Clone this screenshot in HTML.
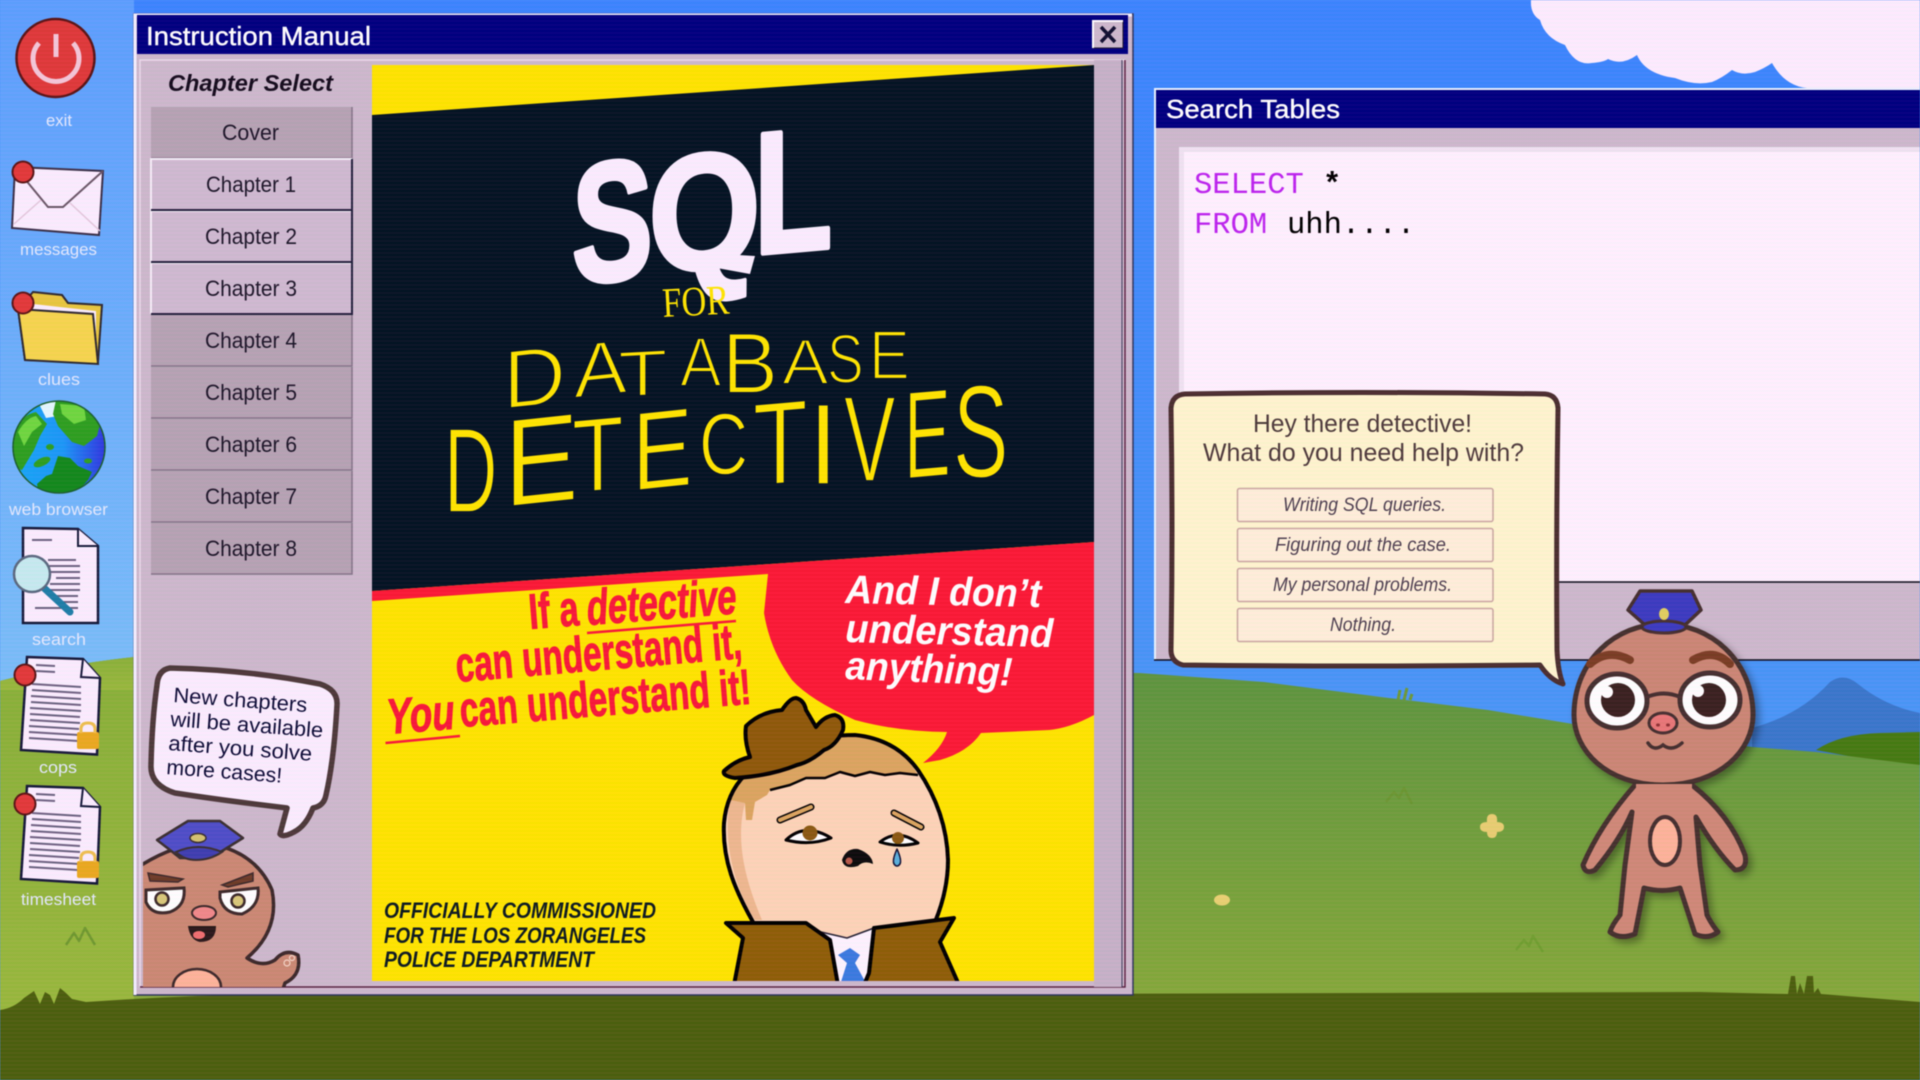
<!DOCTYPE html>
<html lang="en"><head><meta charset="utf-8"><title>Instruction Manual</title>
<style>
html,body{margin:0;padding:0;width:1920px;height:1080px;overflow:hidden;background:#4a95f8}
svg{position:absolute;left:0;top:0;display:block;filter:blur(.5px)}
text{font-family:"Liberation Sans",sans-serif}
#scan{position:absolute;left:0;top:0;width:1920px;height:1080px;pointer-events:none;
background:repeating-linear-gradient(to bottom,rgba(255,80,200,.03) 0,rgba(255,80,200,.03) 2px,rgba(30,50,70,.018) 2px,rgba(30,50,70,.018) 4px)}
</style></head><body>
<svg width="1920" height="1080" viewBox="0 0 1920 1080" xmlns="http://www.w3.org/2000/svg">
<defs>
<linearGradient id="sky" x1="0" y1="0" x2="0" y2="1"><stop offset="0" stop-color="#3c86ff"/><stop offset="1" stop-color="#52a0f4"/></linearGradient>
<linearGradient id="skyL" x1="0" y1="0" x2="0" y2="1"><stop offset="0" stop-color="#5da0ff"/><stop offset="1" stop-color="#7cc0fa"/></linearGradient>
<linearGradient id="grass" x1="0" y1="0" x2="0" y2="1"><stop offset="0" stop-color="#5c9540"/><stop offset="1" stop-color="#8bad3a"/></linearGradient>
<linearGradient id="grassL" x1="0" y1="0" x2="0" y2="1"><stop offset="0" stop-color="#8ab23a"/><stop offset="1" stop-color="#9aba3e"/></linearGradient>
<linearGradient id="ocean" x1="0" y1="0" x2="1" y2="0"><stop offset="0" stop-color="#18a8f8"/><stop offset=".55" stop-color="#1c98f8"/><stop offset="1" stop-color="#3038e0"/></linearGradient>
<clipPath id="panelClip"><rect x="143" y="60" width="229" height="927"/></clipPath>
<clipPath id="coverClip"><rect x="372" y="65" width="722" height="916"/></clipPath>
<clipPath id="globeClip"><circle cx="59" cy="447" r="46"/></clipPath>
<filter id="sh" x="-20%" y="-20%" width="140%" height="140%"><feDropShadow dx="4" dy="4" stdDeviation="4" flood-color="#000" flood-opacity=".35"/></filter>
<g id="doc"><path d="M27 657 83 659 100 678 97 754.5 21 750Z" fill="#fbeeff" stroke="#161a3a" stroke-width="2.5"/><path d="M83 659 81 677 100 678" fill="#fbeeff" stroke="#161a3a" stroke-width="2"/>
<path d="M36 665 55 666M36 671 55 672M32 684 81 687M32 690 81 693M31 696 81 699M31 702 81 705M30 708 81 711M30 714 80 717M30 720 80 723M29 726 79 729M29 732 79 735M29 738 78 741" stroke="#6b6280" stroke-width="2"/>
<rect x="77" y="732" width="22" height="17" rx="2" fill="#eaaa20"/><path d="M81 733v-4q0-6 7-6t7 6v4" fill="none" stroke="#eec050" stroke-width="3"/>
<circle cx="25" cy="675" r="10.5" fill="#e23a3a" stroke="#5a1515" stroke-width="2"/></g>
</defs>

<!-- background -->
<rect width="1920" height="1080" fill="url(#sky)"/>
<rect width="134" height="700" fill="url(#skyL)"/>
<path d="M1531 0Q1530 14 1540 20Q1545 38 1565 45Q1575 66 1592 63Q1604 62 1608 59Q1622 66 1637 55Q1645 74 1675 78Q1695 86 1712 82Q1722 78 1732 70Q1742 76 1755 72Q1765 68 1772 63Q1785 86 1807 88H1920V0Z" fill="#fdeeff"/>
<path d="M1752 728Q1800 715 1830 682Q1844 672 1858 684Q1885 706 1920 713V770H1752Z" fill="#3a78cc"/>
<path d="M1816 750Q1840 734 1880 733L1920 732V770L1880 762Z" fill="#467c12"/>
<path d="M0 681Q60 665 134 657L1140 673 1264 682 1389 698 1488 710 1573 724 1752 747 1816 752 1920 765V1040H0Z" fill="url(#grass)"/>
<rect x="0" y="682" width="134" height="340" fill="url(#grassL)"/><path d="M0 681Q60 665 134 657V690H0Z" fill="url(#grassL)"/>
<path d="M66 945 74 933 79 941 85 928 95 945" fill="none" stroke="#6f9a30" stroke-width="2.5" stroke-linejoin="round"/>
<path d="M1386 802 1394 792 1399 798 1404 788 1412 804" fill="none" stroke="#6b9832" stroke-width="2.5" stroke-linejoin="round"/>
<path d="M1516 950 1524 940 1529 946 1533 936 1543 952" fill="none" stroke="#70a030" stroke-width="2.5" stroke-linejoin="round"/>
<path d="M1398 700 1400 690M1404 700 1407 688M1410 700 1412 694" stroke="#6d9a38" stroke-width="3"/>
<path d="M1492 814q6 0 5 8q7 0 7 5t-7 5q0 6-5 6t-5-6q-7 0-7-5t7-5q-1-8 5-8Z" fill="#e8cf72"/>
<ellipse cx="1222" cy="900" rx="8" ry="5.5" fill="#e8d272"/>
<path d="M0 1010Q14 1008 24 998L34 991 40 1004 45 992 50 995 54 1004 60 988 66 993 72 999 86 1002Q200 994 300 994H1000L1700 992 1788 994 1791 976 1795 976 1797 994 1800 983 1804 994 1807 976 1813 976 1814 993 1818 988 1821 994 1920 1002V1080H0Z" fill="#4c600e"/>

<!-- desktop icons -->
<circle cx="55.5" cy="58" r="39" fill="#df3a3a" stroke="#5a1515" stroke-width="2.5"/>
<path d="M39 43A23 23 0 1 0 73 43" fill="none" stroke="#f4c8d8" stroke-width="5"/><path d="M56 34V57" stroke="#f4c8d8" stroke-width="5"/>
<g font-size="17" fill="#e4ebff" text-anchor="start">
<text x="46" y="126" textLength="26" lengthAdjust="spacingAndGlyphs">exit</text>
<text x="20" y="255" textLength="77" lengthAdjust="spacingAndGlyphs">messages</text>
<text x="38" y="385" textLength="42" lengthAdjust="spacingAndGlyphs">clues</text>
<text x="9" y="515" textLength="99" lengthAdjust="spacingAndGlyphs">web browser</text>
<text x="32" y="645" textLength="54" lengthAdjust="spacingAndGlyphs">search</text>
<text x="39" y="773" textLength="38" lengthAdjust="spacingAndGlyphs">cops</text>
<text x="21" y="905" textLength="75" lengthAdjust="spacingAndGlyphs">timesheet</text>
</g>
<path d="M15 167 103 171 99 235 12 228Z" fill="#fbeeff" stroke="#3a3048" stroke-width="2"/>
<path d="M15 167 48 207H63L103 171" fill="none" stroke="#6b5868" stroke-width="2"/><path d="M14 224 41 200M100 231 70 203" stroke="#e3c8dc" stroke-width="1.5"/>
<circle cx="23" cy="172" r="10.5" fill="#e23a3a" stroke="#5a1515" stroke-width="2"/>
<path d="M33 292 62 295 68 303 102 305 98 362 25 360 18 309Z" fill="#e8c840" stroke="#2e2a30" stroke-width="2"/>
<path d="M24 303 96 311 96 355 30 350Z" fill="#fbeeff"/>
<path d="M18 309 93 314 98 364 25 360Z" fill="#f6d64e" stroke="#2e2a30" stroke-width="2"/>
<circle cx="23" cy="303" r="10.5" fill="#e23a3a" stroke="#5a1515" stroke-width="2"/>
<g clip-path="url(#globeClip)">
<rect x="13" y="401" width="92" height="92" fill="url(#ocean)"/>
<path d="M37 400H64L58 416 46 418Z" fill="#e4f8ff"/>
<path d="M13 430Q24 414 36 412L47 424 40 436 34 450 22 470 13 468Z" fill="#2ea020"/>
<path d="M18 432Q26 418 36 416L42 424 32 432 24 446Z" fill="#6fd840"/>
<path d="M56 400H90L100 424 97 436 84 446 72 442 58 426 53 414Z" fill="#2ea020"/>
<path d="M60 404 84 406 86 420 74 424 62 414Z" fill="#6fd840"/>
<path d="M37 484 46 476 52 474 58 456 70 458 78 466 92 472 88 480 70 500H40Z" fill="#138a1c"/>
<ellipse cx="42" cy="462" rx="9" ry="4" fill="#2ea020" transform="rotate(-25 42 462)"/><ellipse cx="50" cy="447" rx="4" ry="3" fill="#2ea020"/><ellipse cx="88" cy="461" rx="4" ry="2.5" fill="#2ea020"/>
</g>
<circle cx="59" cy="447" r="46" fill="none" stroke="#1a6030" stroke-width="1.5"/>
<path d="M23 528 78 529 98 546 98 623 23 623Z" fill="#fbeeff" stroke="#161a3a" stroke-width="2.5"/>
<path d="M78 529 78 546 98 546" fill="#fbeeff" stroke="#161a3a" stroke-width="2"/>
<path d="M32 540H52M48 560H76M48 566H80M50 572H80M56 578H80M50 584H80M50 590H80M54 596H78M60 602H78M35 608H78" stroke="#6b6280" stroke-width="2"/>
<path d="M44 588 70 612" stroke="#1e7fa8" stroke-width="7" stroke-linecap="round"/>
<circle cx="32" cy="574" r="18" fill="#c6ecf0" stroke="#5a6a80" stroke-width="2.5"/>
<use href="#doc"/><use href="#doc" y="129"/>

<!-- instruction manual window -->
<rect x="134" y="14" width="999" height="981" fill="#cdbacd" stroke="#30365e" stroke-width="1.5"/>
<path d="M135 995V15H1132" fill="none" stroke="#f4f0ff" stroke-width="3"/>
<path d="M140 987V60H1125V987Z" fill="none" stroke="#ecdcec" stroke-width="1.5"/>
<path d="M140 987H1125V60" fill="none" stroke="#5a2040" stroke-width="1.5"/>
<rect x="137" y="15" width="991" height="39" fill="#000080"/>
<text x="146" y="45" font-size="26" fill="#fff" stroke="#fff" stroke-width=".4" textLength="225" lengthAdjust="spacingAndGlyphs">Instruction Manual</text>
<rect x="1093" y="21" width="30" height="27" fill="#cdbacd" stroke="#201830" stroke-width="1"/>
<path d="M1093 48V21H1123" fill="none" stroke="#fff" stroke-width="2"/>
<path d="M1101 27 1115 42M1115 27 1101 42" stroke="#101030" stroke-width="3.5"/>
<text x="168" y="91" font-size="23" font-weight="700" font-style="italic" fill="#140c1c" textLength="165" lengthAdjust="spacingAndGlyphs">Chapter Select</text>

<!-- chapter buttons -->
<g fill="#b6a4b4"><rect x="151" y="107" width="201" height="51"/><rect x="151" y="315" width="201" height="51"/><rect x="151" y="367" width="201" height="51"/><rect x="151" y="419" width="201" height="51"/><rect x="151" y="471" width="201" height="51"/><rect x="151" y="523" width="201" height="51"/></g>
<g fill="none" stroke="#837488" stroke-width="1.5"><path d="M151 158H352V107"/><path d="M151 366H352V315"/><path d="M151 418H352V367"/><path d="M151 470H352V419"/><path d="M151 522H352V471"/><path d="M151 574H352V523"/></g>
<g fill="#cfbbd1"><rect x="151" y="159" width="201" height="51"/><rect x="151" y="211" width="201" height="51"/><rect x="151" y="263" width="201" height="51"/></g>
<g fill="none" stroke="#f6eef8" stroke-width="2"><path d="M151 210V159H352"/><path d="M151 262V211H352"/><path d="M151 314V263H352"/></g>
<g fill="none" stroke="#22203c" stroke-width="2"><path d="M151 210H352V159"/><path d="M151 262H352V211"/><path d="M151 314H352V263"/></g>
<g font-size="22" fill="#1c1628">
<text x="222" y="140" textLength="57" lengthAdjust="spacingAndGlyphs">Cover</text>
<text x="206" y="192" textLength="90" lengthAdjust="spacingAndGlyphs">Chapter 1</text>
<text x="205" y="244" textLength="92" lengthAdjust="spacingAndGlyphs">Chapter 2</text>
<text x="205" y="296" textLength="92" lengthAdjust="spacingAndGlyphs">Chapter 3</text>
<text x="205" y="348" textLength="92" lengthAdjust="spacingAndGlyphs">Chapter 4</text>
<text x="205" y="400" textLength="92" lengthAdjust="spacingAndGlyphs">Chapter 5</text>
<text x="205" y="452" textLength="92" lengthAdjust="spacingAndGlyphs">Chapter 6</text>
<text x="205" y="504" textLength="92" lengthAdjust="spacingAndGlyphs">Chapter 7</text>
<text x="205" y="556" textLength="92" lengthAdjust="spacingAndGlyphs">Chapter 8</text>
</g>

<!-- small speech bubble -->
<path d="M170 668Q250 670 320 684Q338 690 337 705Q334 760 326 795Q324 806 313 808Q306 826 294 832Q283 838 280 834L287 808Q220 800 175 793Q150 785 151 765Q152 720 157 685Q158 670 170 668Z" fill="#fbeeff" stroke="#4d3a3a" stroke-width="5.5" stroke-linejoin="round"/>
<g font-size="21" fill="#0c0c36">
<text transform="translate(173 702) rotate(4.3)" textLength="134" lengthAdjust="spacingAndGlyphs">New chapters</text>
<text transform="translate(170 726) rotate(4.3)" textLength="153" lengthAdjust="spacingAndGlyphs">will be available</text>
<text transform="translate(168 750) rotate(4.3)" textLength="144" lengthAdjust="spacingAndGlyphs">after you solve</text>
<text transform="translate(166 774) rotate(4.3)" textLength="116" lengthAdjust="spacingAndGlyphs">more cases!</text>
</g>

<!-- small cop -->
<g clip-path="url(#panelClip)">
<path d="M120 880Q165 845 205 843Q255 850 272 890Q280 930 247 958Q262 968 275 960Q285 948 298 955Q302 975 285 983L282 992H120Z" fill="#cb8a74" stroke="#3c2a2a" stroke-width="3.5" stroke-linejoin="round"/>
<ellipse cx="197" cy="987" rx="24" ry="18" fill="#fdb49a" stroke="#3c2a2a" stroke-width="2.5"/>
<path d="M148 873 183 879 178 882 150 881Z" fill="#6e3d28" stroke="#3c2a2a" stroke-width="1.5"/><path d="M253 873 222 885 228 887 253 881Z" fill="#6e3d28" stroke="#3c2a2a" stroke-width="1.5"/>
<path d="M146 890 184 888Q186 906 170 912 152 916 146 902Z" fill="#fff" stroke="#3c2a2a" stroke-width="3"/>
<path d="M220 892 258 888Q260 906 242 914 224 914 220 898Z" fill="#fff" stroke="#3c2a2a" stroke-width="3"/>
<circle cx="162" cy="899" r="6.5" fill="#d9c97a" stroke="#3c2a2a" stroke-width="2.5"/><circle cx="238" cy="901" r="6.5" fill="#d9c97a" stroke="#3c2a2a" stroke-width="2.5"/>
<ellipse cx="204" cy="913" rx="12" ry="7" fill="#f08a8a" stroke="#3c2a2a" stroke-width="2"/>
<path d="M188 926H216Q216 942 200 942 190 940 188 926Z" fill="#2a1a1a"/><ellipse cx="199" cy="935" rx="6" ry="4" fill="#f07070"/>
<path d="M157 840 188 821 220 821 243 838 222 851 208 858H180L170 850Z" fill="#4f4fc8" stroke="#3a3030" stroke-width="2.5" stroke-linejoin="round"/>
<path d="M176 852Q198 842 222 852Q210 860 196 860 184 860 176 852Z" fill="#3f3fb0" stroke="#3a3030" stroke-width="2"/>
<ellipse cx="198" cy="838" rx="8" ry="4.5" fill="#d4c470" stroke="#3a3030" stroke-width="1.5"/>
<circle cx="287" cy="963" r="3" fill="none" stroke="#f5d8c8" stroke-width="1.2"/><circle cx="292" cy="958" r="2.5" fill="none" stroke="#f5d8c8" stroke-width="1.2"/>
</g>

<!-- cover -->
<rect x="372" y="65" width="722" height="916" fill="#ffe600"/>
<path d="M372 115 1094 65V542L372 591Z" fill="#041423"/>
<path d="M372 591 1094 542V715Q1070 728 1049 730L981 733Q968 752 940 760L923 763Q942 748 947 732Q900 732 855 720Q810 700 792 680Q770 650 764 613L768 574 372 601Z" fill="#fb1a36"/>
<g fill="#fbeeff" stroke="#fbeeff" font-weight="700" font-size="173" stroke-linejoin="round">
<text transform="translate(572 284) skewY(-6) scale(.7 .98)" stroke-width="5">S</text>
<text transform="translate(648 274) skewY(-5) scale(.84 .96)" stroke-width="3.5">Q</text>
<text transform="translate(754 254) skewY(-5) scale(.74 1)" stroke-width="5">L</text>
</g>
<path d="M722 254 755 256 750 274 695 264Z" fill="#fbeeff"/>
<text transform="translate(663 317) rotate(-3) scale(.82 1)" font-size="42" style="font-family:'Liberation Serif',serif" fill="#ffe600">FOR</text>
<g font-size="100" fill="#ffe600" stroke="#041423" stroke-width="2">
<text transform="translate(503 409) skewY(-6) scale(.87 .83)" vector-effect="non-scaling-stroke">D</text>
<text transform="translate(574 398) skewY(-6) scale(.80 .77)" vector-effect="non-scaling-stroke">A</text>
<text transform="translate(618 397) skewY(-3) scale(.81 .65)" vector-effect="non-scaling-stroke">T</text>
<text transform="translate(680 386) scale(.62 .70)" vector-effect="non-scaling-stroke">A</text>
<text transform="translate(722 393) scale(.84 .86)" vector-effect="non-scaling-stroke">B</text>
<text transform="translate(782 384) scale(.70 .64)" vector-effect="non-scaling-stroke">A</text>
<text transform="translate(827 383) scale(.55 .70)" vector-effect="non-scaling-stroke">S</text>
<text transform="translate(869 379) scale(.61 .70)" vector-effect="non-scaling-stroke">E</text>
</g>
<g font-size="100" fill="#ffe600" stroke="#041423" stroke-width="1.5">
<text transform="translate(444 512) scale(.74 1.21)" vector-effect="non-scaling-stroke">D</text>
<text transform="translate(504 507) skewY(-6) scale(1.12 1.25)" vector-effect="non-scaling-stroke">E</text>
<text transform="translate(572 493) skewY(-5) scale(.84 1.05)" vector-effect="non-scaling-stroke">T</text>
<text transform="translate(632 491) skewY(-6) scale(.91 1.12)" vector-effect="non-scaling-stroke">E</text>
<text transform="translate(699 474) scale(.68 .87)" vector-effect="non-scaling-stroke">C</text>
<text transform="translate(753 486) skewY(-5) scale(.89 1.18)" vector-effect="non-scaling-stroke">T</text>
<text transform="translate(808 484) scale(1.1 1.15)" vector-effect="non-scaling-stroke">I</text>
<text transform="translate(844 481) scale(.77 1.22)" vector-effect="non-scaling-stroke">V</text>
<text transform="translate(904 479) skewY(-5) scale(.70 1.25)" vector-effect="non-scaling-stroke">E</text>
<text transform="translate(953 477) scale(.83 1.32)" vector-effect="non-scaling-stroke">S</text>
</g>

<!-- red tagline -->
<g fill="#f8193a" stroke="#f8193a" stroke-width=".9" font-weight="700" font-size="50">
<text transform="translate(530 629) rotate(-4.5)" textLength="50" lengthAdjust="spacingAndGlyphs">If a</text>
<text transform="translate(588 625) rotate(-4.5)" textLength="150" lengthAdjust="spacingAndGlyphs" font-style="italic">detective</text>
<text transform="translate(457 682) rotate(-4.8)" textLength="287" lengthAdjust="spacingAndGlyphs">can understand it,</text>
<text transform="translate(388 734) rotate(-4.6)" textLength="68" lengthAdjust="spacingAndGlyphs" font-style="italic">You</text>
<text transform="translate(461 727) rotate(-4.6)" textLength="292" lengthAdjust="spacingAndGlyphs">can understand it!</text>
</g>
<path d="M587 633 736 621M385.500 743 460 736" stroke="#f8193a" stroke-width="2.5"/>
<g fill="#fff" font-weight="700" font-style="italic" font-size="40">
<text transform="translate(845 603) rotate(1.2)" textLength="196" lengthAdjust="spacingAndGlyphs">And I don’t</text>
<text transform="translate(845 642) rotate(1.4)" textLength="208" lengthAdjust="spacingAndGlyphs">understand</text>
<text transform="translate(845 679) rotate(2.3)" textLength="167" lengthAdjust="spacingAndGlyphs">anything!</text>
</g>
<g fill="#0b1a20" font-weight="700" font-style="italic" font-size="22">
<text x="384" y="918" textLength="272" lengthAdjust="spacingAndGlyphs">OFFICIALLY COMMISSIONED</text>
<text x="384" y="943" textLength="262" lengthAdjust="spacingAndGlyphs">FOR THE LOS ZORANGELES</text>
<text x="384" y="967" textLength="210" lengthAdjust="spacingAndGlyphs">POLICE DEPARTMENT</text>
</g>

<!-- detective -->
<g clip-path="url(#coverClip)" stroke-linejoin="round">
<path d="M753 922C735 890 722 860 724 823 726 800 735 785 745 775 780 745 820 735 855 735 885 738 905 752 918 770 935 795 947 825 948 860 948 885 942 905 935 922L874 928 847 938 821 932 806 923Z" fill="#fdd5b8"/>
<path d="M730 800C722 840 735 890 755 920L762 920C745 880 735 840 745 803Z" fill="#eeb98f"/>
<path d="M730 800C745 750 810 735 855 735 885 738 905 752 918 775L900 773 885 775 870 772 855 776 840 772 825 778 806 778 790 785 770 790 767 795 755 802 752 820 746 820 745 803Z" fill="#dca660"/>
<path d="M918 775 900 773 885 775 870 772 855 776 840 772 825 778 806 778 790 785 770 790" fill="none" stroke="#000" stroke-width="2.5"/>
<path d="M753 922C735 890 722 860 724 823 726 800 735 785 745 775 780 745 820 735 855 735 885 738 905 752 918 770 935 795 947 825 948 860 948 885 942 905 935 922" fill="none" stroke="#000" stroke-width="4"/>
<path d="M780 820 811 807" stroke="#000" stroke-width="7" stroke-linecap="round"/><path d="M780 820 811 807" stroke="#dca660" stroke-width="4" stroke-linecap="round"/>
<path d="M894 813 921 827" stroke="#000" stroke-width="7" stroke-linecap="round"/><path d="M894 813 921 827" stroke="#dca660" stroke-width="4" stroke-linecap="round"/>
<path d="M786 840Q805 822 831 838Q810 846 786 840Z" fill="#fff" stroke="#000" stroke-width="3"/><circle cx="810" cy="833" r="7.5" fill="#8a5a12"/>
<path d="M880 842Q898 828 918 843Q898 848 880 842Z" fill="#fff" stroke="#000" stroke-width="3"/><circle cx="898" cy="838" r="6" fill="#8a5a12"/>
<path d="M897 849Q902 860 900 864 897 868 894 864 892 860 897 849Z" fill="#5ab0dc" stroke="#113" stroke-width="1.5"/>
<path d="M842 860Q846 848 858 849 872 854 873 864 864 860 858 866 844 870 842 860Z" fill="#0c0c0c"/><circle cx="849" cy="861" r="3.5" fill="#b85a4a"/>
<path d="M821 932 847 938 874 928 869 973 864 985H838Z" fill="#fdf4ff" stroke="#223" stroke-width="1.5"/>
<path d="M838 955 850 948 860 955 855 963 867 985H840L847 963Z" fill="#3b7be0"/>
<path d="M726 923 806 923 830 940 838 985H734L743 938ZM874 928 954 918 940 942 959 985H864L869 973Z" fill="#8f5f08" stroke="#000" stroke-width="4"/>
<path d="M724 771Q736 760 750 757 744 740 746 726 760 712 782 710 790 698 796 698 804 700 806 710L816 727Q824 716 835 715 845 718 843 730 836 746 824 750 810 762 797 765 770 776 735 778 722 776 724 771Z" fill="#8f5a0a" stroke="#000" stroke-width="4"/>
</g>
<rect x="1094" y="60" width="28" height="927" fill="#c6b3c8"/>
<path d="M1122 60V987" stroke="#3a3a58" stroke-width="1"/>

<!-- search tables window -->
<rect x="1154" y="88" width="766" height="572" fill="#cdbacd"/>
<path d="M1155 660V89H1920" fill="none" stroke="#e8f4ff" stroke-width="2"/>
<path d="M1154 660H1920" stroke="#0a0a18" stroke-width="1.5"/>
<rect x="1156" y="90" width="764" height="38" fill="#000080"/>
<text x="1166" y="118" font-size="26" fill="#fff" stroke="#fff" stroke-width=".4" textLength="174" lengthAdjust="spacingAndGlyphs">Search Tables</text>
<rect x="1179" y="147" width="741" height="435" fill="#f0e4f2"/>
<rect x="1184" y="152" width="736" height="430" fill="#fff2ff"/>
<path d="M1179 582H1920" stroke="#0a0a18" stroke-width="1.5"/>
<text x="1194" y="193" fill="#bd25ef" style="font-family:'Liberation Mono',monospace" font-size="30.500">SELECT</text>
<text x="1323" y="193" fill="#000" font-weight="700" style="font-family:'Liberation Mono',monospace" font-size="30.500">*</text>
<text x="1194" y="233" fill="#bd25ef" style="font-family:'Liberation Mono',monospace" font-size="30.500">FROM</text>
<text x="1287" y="233" fill="#000" style="font-family:'Liberation Mono',monospace" font-size="30.500">uhh....</text>

<!-- help bubble -->
<path d="M1185 394Q1360 391 1545 394Q1557 395 1558 408Q1556 530 1557 650Q1558 672 1563 684Q1550 680 1540 665Q1360 667 1183 665Q1171 662 1171 650Q1173 530 1171 408Q1172 395 1185 394Z" fill="#fff6cf" stroke="#4a2f2f" stroke-width="5" stroke-linejoin="round"/>
<g font-size="25" fill="#4d3b3b">
<text x="1253" y="432" textLength="219" lengthAdjust="spacingAndGlyphs">Hey there detective!</text>
<text x="1203" y="461" textLength="321" lengthAdjust="spacingAndGlyphs">What do you need help with?</text>
</g>
<g fill="#fff0da" stroke="#c8a8a0" stroke-width="1.5">
<rect x="1237.500" y="488.500" width="255.500" height="33" rx="2"/><rect x="1237.500" y="528.500" width="255.500" height="33" rx="2"/><rect x="1237.500" y="568.500" width="255.500" height="33" rx="2"/><rect x="1237.500" y="608.500" width="255.500" height="33" rx="2"/>
</g>
<g font-size="19" font-style="italic" fill="#4d4050">
<text x="1283" y="511" textLength="163" lengthAdjust="spacingAndGlyphs">Writing SQL queries.</text>
<text x="1275" y="551" textLength="176" lengthAdjust="spacingAndGlyphs">Figuring out the case.</text>
<text x="1273" y="591" textLength="179" lengthAdjust="spacingAndGlyphs">My personal problems.</text>
<text x="1330" y="631" textLength="66" lengthAdjust="spacingAndGlyphs">Nothing.</text>
</g>

<!-- big character -->
<g filter="url(#sh)" stroke-linejoin="round">
<path d="M1635 785Q1600 825 1583 865Q1585 875 1595 870Q1620 840 1632 812L1625 865 1620 915Q1612 925 1610 932 1620 940 1635 934L1644 888Q1662 893 1680 888L1695 934Q1708 940 1718 932 1712 925 1707 915L1700 865 1696 817Q1715 850 1735 870 1748 870 1745 855 1730 815 1692 785Z" fill="#cf8a78" stroke="#45302f" stroke-width="5"/>
<path d="M1663 624C1710 624 1753 660 1753 715 1753 750 1720 785 1663 785 1606 785 1574 750 1574 715 1574 660 1616 624 1663 624Z" fill="#cb8874" stroke="#45302f" stroke-width="5"/>
<path d="M1636 784H1692V792H1636Z" fill="#cf8a78"/>
</g>
<ellipse cx="1665" cy="841" rx="15" ry="24" fill="#fdb49a" stroke="#45302f" stroke-width="4"/>
<path d="M1590 664Q1608 648 1630 660" fill="none" stroke="#7a3e24" stroke-width="8" stroke-linecap="round"/>
<path d="M1693 660Q1714 648 1730 664" fill="none" stroke="#7a3e24" stroke-width="8" stroke-linecap="round"/>
<ellipse cx="1617" cy="701" rx="30" ry="27" fill="#fff" stroke="#45302f" stroke-width="5"/>
<ellipse cx="1710" cy="700" rx="30" ry="27" fill="#fff" stroke="#45302f" stroke-width="5"/>
<path d="M1647 697Q1664 690 1680 697" fill="none" stroke="#45302f" stroke-width="4"/>
<circle cx="1618" cy="700" r="17" fill="#3a2220"/><circle cx="1709" cy="700" r="17" fill="#3a2220"/>
<circle cx="1607" cy="692" r="6" fill="#fff"/><circle cx="1698" cy="691" r="6" fill="#fff"/>
<ellipse cx="1663" cy="723" rx="14" ry="10" fill="#e87878" stroke="#45302f" stroke-width="3"/>
<ellipse cx="1658" cy="725" rx="2" ry="1.500" fill="#8a3030"/><ellipse cx="1668" cy="725" rx="2" ry="1.500" fill="#8a3030"/>
<path d="M1648 743Q1654 752 1663 745 1672 752 1682 743" fill="none" stroke="#45302f" stroke-width="3.500" stroke-linecap="round"/>
<path d="M1640 591 1692 591 1701 610 1685 625H1645L1628 610Z" fill="#3c3cc0" stroke="#45302f" stroke-width="3.500" stroke-linejoin="round"/>
<ellipse cx="1664" cy="627" rx="22" ry="6" fill="#3c3cc0" stroke="#45302f" stroke-width="3"/>
<ellipse cx="1664" cy="614" rx="5" ry="6" fill="#e0d060"/>
</svg>
<div id="scan"></div>
</body></html>
